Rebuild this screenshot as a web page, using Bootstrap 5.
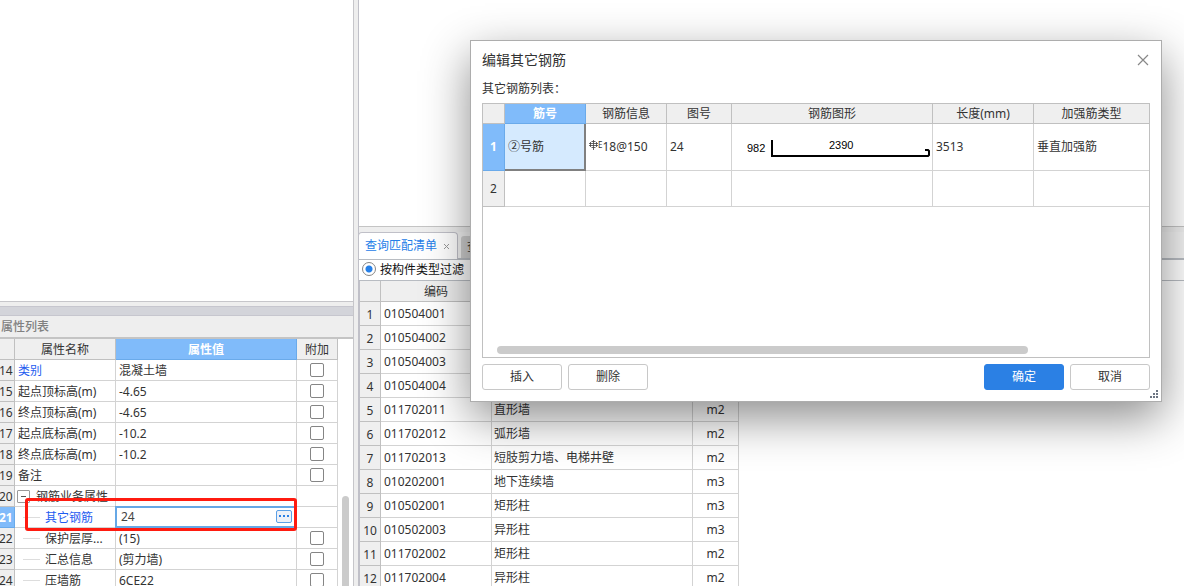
<!DOCTYPE html>
<html lang="zh-CN">
<head>
<meta charset="utf-8">
<meta name="viewport" content="width=device-width, initial-scale=1">
<title>编辑其它钢筋</title>
<link href="https://cdn.jsdelivr.net/npm/bootstrap@5.3.0/dist/css/bootstrap.min.css" rel="stylesheet">
<style>
  body { font: 12px/20px "Noto Sans", "Noto Sans CJK SC", sans-serif; color: #333; background: #eee; }
  .left-pane { width: 354px; border-right: 1px solid #c6c6ca; }
  .right-pane { margin-left: 4px; border-left: 1px solid #c0c0c8; min-width: 0; }
  .model-view { height: 302px; border-bottom: 1px solid #c6c6ca; }
  .dock-bar { height: 10px; margin-top: 4px; background: #d3d4da; border: 1px solid #c6c6ce; border-width: 1px 0; }
  .dock-title { height: 23px; padding: 1px; color: #808080; font-weight: 500; border-bottom: 2px solid #c4c4c4; }

  .grid { table-layout: fixed; border-collapse: separate; border-spacing: 0; }
  .grid th, .grid td { padding: 0 3px; border-right: 1px solid #d3d3d3; border-bottom: 1px solid #d3d3d3; white-space: nowrap; overflow: hidden; }
  .grid th { background: #efefef; font-weight: 400; text-align: center; border-color: #c0c0c0; }
  .grid thead th { line-height: 18px; padding-top: 1px; }
  .grid .on { background: #80bbfa; color: #fff; font-weight: 700; border-color: #6aaaea; }
  .c20 { width: 21px } .c19 { width: 19px } .c41 { width: 41px } .c46 { width: 46px } .c101 { width: 101px } .c181 { width: 181px }
  .c111 { width: 111px } .c201 { width: 201px } .c22 { width: 22px } .c81 { width: 81px } .c65 { width: 65px }

  .props { width: 342px; margin-left: -4px; }
  .props tr { height: 21px; }
  .props th, .props td { line-height: 18px; }
  .grid.props th, .grid.props td { padding-top: 2px; }
  .props tbody th { text-align: right; }
  .props td.over { position: relative; overflow: visible; }
  .grid.props .tick { padding-top: 0; }
  .tick input { appearance: none; display: block; width: 14px; height: 14px; margin: 0 auto; border: 1px solid #858585; border-radius: 2px; background: #fff; }
  .link-like { color: #1e5cf0; text-decoration: none; }
  .twig { display: inline-block; width: 17px; margin: 0 5px 4px; border-top: 1px solid #ddd; }
  .fold { width: 13px; height: 13px; padding: 0; border: 1px solid #999; border-radius: 1px; background: #fff; margin: 0 6px 2px -1px; }
  .editor { height: 22px; margin: -3px -3px -1px -4px; border: 2px solid #66a8e6; background: #fff; }
  .editor input { border: 0; padding: 0 4px; color: #444; outline: 0; min-width: 0; }
  .more { width: 16px; height: 13px; padding: 0; margin: 2px 2px; border: 1px solid #5ba0e6; border-radius: 2px; background: #eef1f8; }
  .callout { position: absolute; left: 10px; top: -9px; width: 272px; height: 33px; border: 3px solid #ff1b10; border-radius: 3px; z-index: 2; pointer-events: none; }
  .thumb-v { width: 8px; margin: 157px 4px 0; background: #cbcbcb; border-radius: 4px 4px 0 0; }

  .canvas-view { height: 227px; border-bottom: 1px solid #c4c4c4; }
  .tabs { height: 27px; margin-top: 5px; background: #f2f2f2; border-bottom: 1px solid #b8bcc2; }
  .tab { border: 1px solid #c0c0c8; border-bottom: 0; border-radius: 4px 4px 0 0; background: #fff; height: 27px; width: 100px; margin-left: -1px; padding: 0 6px; color: #2680e8; }
  .tab-off { border: 0; border-radius: 3px 0 0 0; background: #cfcfcf; color: #333; height: 22px; margin: 4px 0 0 3px; padding: 0 6px; }
  .filter { height: 22px; border: 1px solid #b8bcc2; border-width: 1px 0; padding-left: 3px; color: #111; }
  .filter input { appearance: none; width: 14px; height: 14px; margin: 0 4px 2px 0; border: 1px solid #858585; border-radius: 50%; background: radial-gradient(circle, #2680e8 3px, #fff 4px); }
  .bill { width: 380px; border-left: 1px solid #c0c0c8; }
  .bill thead tr { height: 21px; }
  .grid.bill thead th { padding-top: 2px; }
  .bill tbody tr { height: 24px; }
  .bill tbody th { padding-top: 2px; }
  .bill td:nth-child(3) { padding-left: 2px; }
  .bill .unit { text-align: center; }

  .dialog { position: absolute; left: 470px; right: 22px; top: 40px; z-index: 5; padding: 0 11px 11px; background: #fff; border: 1px solid #adadad; box-shadow: 0 16px 44px rgba(0,0,0,.45); }
  .dialog-title { height: 38px; }
  .dialog h1 { font-size: 14px; line-height: 20px; font-weight: 400; }
  .x-btn { border: 0; background: none; padding: 0; width: 13px; height: 20px; }
  .frame { height: 255px; border: 1px solid #c0c0c0; }
  .bars thead tr { height: 20px; }
  .bars .first { height: 47px; }
  .bars .second { height: 36px; }
  .bars th:last-child, .bars td:last-child { border-right: 0; }
  .bars td.sel { background: #d5eafe; border: 2px solid #808080; border-width: 0 2px 2px 0; }
  .grid.bars .shape { padding: 0; }
  .shape text { font: 11px "Liberation Sans", sans-serif; fill: #000; }
  .grade { font-size: 8px; line-height: 8px; top: -3px; }
  .thumb-h { height: 8px; width: 531px; margin: 0 0 3px 14px; border-radius: 4px; background: #cbcbcb; }
  .dlg-foot { margin-top: 6px; gap: 6px; }
  .dlg-btn { width: 80px; height: 26px; padding: 0; font-size: 12px; line-height: 24px; border: 1px solid #c8c8c8; border-radius: 3px; background: #fff; color: #333; }
  .dlg-btn.go { background: #2b80e4; border-color: #2b80e4; color: #fff; }
  .grip { position: absolute; right: 2px; bottom: 2px; }
</style>
</head>
<body class="vh-100 overflow-hidden position-relative">
<main class="d-flex h-100">
  <section class="left-pane d-flex flex-column flex-shrink-0 overflow-hidden">
    <div class="model-view bg-white flex-shrink-0"></div>
    <div class="dock-bar flex-shrink-0"></div>
    <div class="dock-title flex-shrink-0">属性列表</div>
    <div class="d-flex bg-white flex-grow-1 overflow-hidden">
      <table class="grid props flex-shrink-0 align-self-start">
        <colgroup><col class="c19"><col class="c101"><col class="c181"><col class="c41"></colgroup>
        <thead><tr><th></th><th>属性名称</th><th class="on">属性值</th><th>附加</th></tr></thead>
        <tbody>
          <tr><th>14</th><td><a href="#" class="link-like">类别</a></td><td>混凝土墙</td><td class="tick"><input type="checkbox" aria-label="附加 类别"></td></tr>
          <tr><th>15</th><td>起点顶标高(m)</td><td>-4.65</td><td class="tick"><input type="checkbox" aria-label="附加 起点顶标高"></td></tr>
          <tr><th>16</th><td>终点顶标高(m)</td><td>-4.65</td><td class="tick"><input type="checkbox" aria-label="附加 终点顶标高"></td></tr>
          <tr><th>17</th><td>起点底标高(m)</td><td>-10.2</td><td class="tick"><input type="checkbox" aria-label="附加 起点底标高"></td></tr>
          <tr><th>18</th><td>终点底标高(m)</td><td>-10.2</td><td class="tick"><input type="checkbox" aria-label="附加 终点底标高"></td></tr>
          <tr><th>19</th><td>备注</td><td></td><td class="tick"><input type="checkbox" aria-label="附加 备注"></td></tr>
          <tr><th>20</th><td><div class="d-flex align-items-center"><button class="fold d-flex" aria-label="折叠"><svg width="11" height="11"><path d="M3 5.5h5" stroke="#555"/></svg></button>钢筋业务属性</div></td><td></td><td></td></tr>
          <tr><th class="on">21</th><td class="over"><span class="twig"></span><a href="#" class="link-like">其它钢筋</a><span class="callout"></span></td>
            <td class="over"><div class="editor d-flex"><input class="flex-grow-1" type="text" value="24" aria-label="其它钢筋"><button class="more d-flex" aria-label="编辑"><svg width="14" height="11"><path d="M2 4h2v2H2zM6 4h2v2H6zM10 4h2v2h-2z" fill="#2b80e4"/></svg></button></div></td><td></td></tr>
          <tr><th>22</th><td><span class="twig"></span>保护层厚...</td><td>(15)</td><td class="tick"><input type="checkbox" aria-label="附加 保护层厚"></td></tr>
          <tr><th>23</th><td><span class="twig"></span>汇总信息</td><td>(剪力墙)</td><td class="tick"><input type="checkbox" aria-label="附加 汇总信息"></td></tr>
          <tr><th>24</th><td><span class="twig"></span>压墙筋</td><td>6CE22</td><td class="tick"><input type="checkbox" aria-label="附加 压墙筋"></td></tr>
        </tbody>
      </table>
      <div class="thumb-v"></div>
    </div>
  </section>

  <section class="right-pane d-flex flex-column flex-grow-1 overflow-hidden">
    <div class="canvas-view bg-white flex-shrink-0"></div>
    <div class="tabs d-flex flex-shrink-0">
      <button class="tab d-flex align-items-center justify-content-between">查询匹配清单 <svg width="9" height="9"><path d="M2 2l5 5M7 2l-5 5" stroke="#999"/></svg></button>
      <button class="tab-off">查</button>
    </div>
    <div class="filter bg-white d-flex align-items-center flex-shrink-0"><input type="radio" id="byType" name="filter" checked><label for="byType">按构件类型过滤</label></div>
    <div class="bg-white flex-grow-1 overflow-hidden">
      <table class="grid bill">
        <colgroup><col class="c20"><col class="c111"><col class="c201"><col class="c46"></colgroup>
        <thead><tr><th></th><th>编码</th><th></th><th></th></tr></thead>
        <tbody>
          <tr><th>1</th><td>010504001</td><td></td><td></td></tr>
          <tr><th>2</th><td>010504002</td><td></td><td></td></tr>
          <tr><th>3</th><td>010504003</td><td></td><td></td></tr>
          <tr><th>4</th><td>010504004</td><td></td><td></td></tr>
          <tr><th>5</th><td>011702011</td><td>直形墙</td><td class="unit">m2</td></tr>
          <tr><th>6</th><td>011702012</td><td>弧形墙</td><td class="unit">m2</td></tr>
          <tr><th>7</th><td>011702013</td><td>短肢剪力墙、电梯井壁</td><td class="unit">m2</td></tr>
          <tr><th>8</th><td>010202001</td><td>地下连续墙</td><td class="unit">m3</td></tr>
          <tr><th>9</th><td>010502001</td><td>矩形柱</td><td class="unit">m3</td></tr>
          <tr><th>10</th><td>010502003</td><td>异形柱</td><td class="unit">m3</td></tr>
          <tr><th>11</th><td>011702002</td><td>矩形柱</td><td class="unit">m2</td></tr>
          <tr><th>12</th><td>011702004</td><td>异形柱</td><td class="unit">m2</td></tr>
        </tbody>
      </table>
    </div>
  </section>
</main>

<div class="dialog" role="dialog" aria-labelledby="dlgTitle">
  <div class="dialog-title d-flex align-items-center justify-content-between">
    <h1 class="m-0" id="dlgTitle">编辑其它钢筋</h1>
    <button class="x-btn d-flex align-items-center" aria-label="关闭"><svg width="12" height="12"><path d="M1 1l10 10M11 1L1 11" stroke="#888" stroke-width="1.2"/></svg></button>
  </div>
  <div class="mb-1">其它钢筋列表：</div>
  <div class="frame d-flex flex-column justify-content-between">
    <table class="grid bars w-100">
      <colgroup><col class="c22"><col class="c81"><col class="c81"><col class="c65"><col class="c201"><col class="c101"><col></colgroup>
      <thead><tr><th></th><th class="on">筋号</th><th>钢筋信息</th><th>图号</th><th>钢筋图形</th><th>长度(mm)</th><th>加强筋类型</th></tr></thead>
      <tbody>
        <tr class="first"><th class="on">1</th><td class="sel">②号筋</td>
          <td><svg width="9" height="11" viewBox="0 0 9 11" class="align-baseline"><path d="M4.500 0v10M2.500 1.500h4M1.500 2v5M7.500 2v5M2.500 7.500h4M0 3.500h9M0 5.500h9" fill="none" stroke="#444" stroke-width=".8"/></svg><sup class="grade">E</sup>18@150</td>
          <td>24</td>
          <td class="shape"><svg class="d-block" width="200" height="46"><text x="15" y="28">982</text><text x="97" y="25">2390</text><path d="M40 16v16h156l1-1v-4l-1-1h-3" fill="none" stroke="#000" stroke-width="2"/></svg></td>
          <td>3513</td><td>垂直加强筋</td></tr>
        <tr class="second"><th>2</th><td></td><td></td><td></td><td></td><td></td><td></td></tr>
      </tbody>
    </table>
    <div class="thumb-h"></div>
  </div>
  <div class="dlg-foot d-flex">
    <button class="dlg-btn">插入</button>
    <button class="dlg-btn">删除</button>
    <button class="dlg-btn go ms-auto">确定</button>
    <button class="dlg-btn">取消</button>
  </div>
  <svg class="grip" width="9" height="9"><path d="M6 0h2v2H6zM3 3h2v2H3zM6 3h2v2H6zM0 6h2v2H0zM3 6h2v2H3zM6 6h2v2H6z" fill="#6d7684"/></svg>
</div>
<script src="https://cdn.jsdelivr.net/npm/bootstrap@5.3.0/dist/js/bootstrap.bundle.min.js"></script>
</body>
</html>
